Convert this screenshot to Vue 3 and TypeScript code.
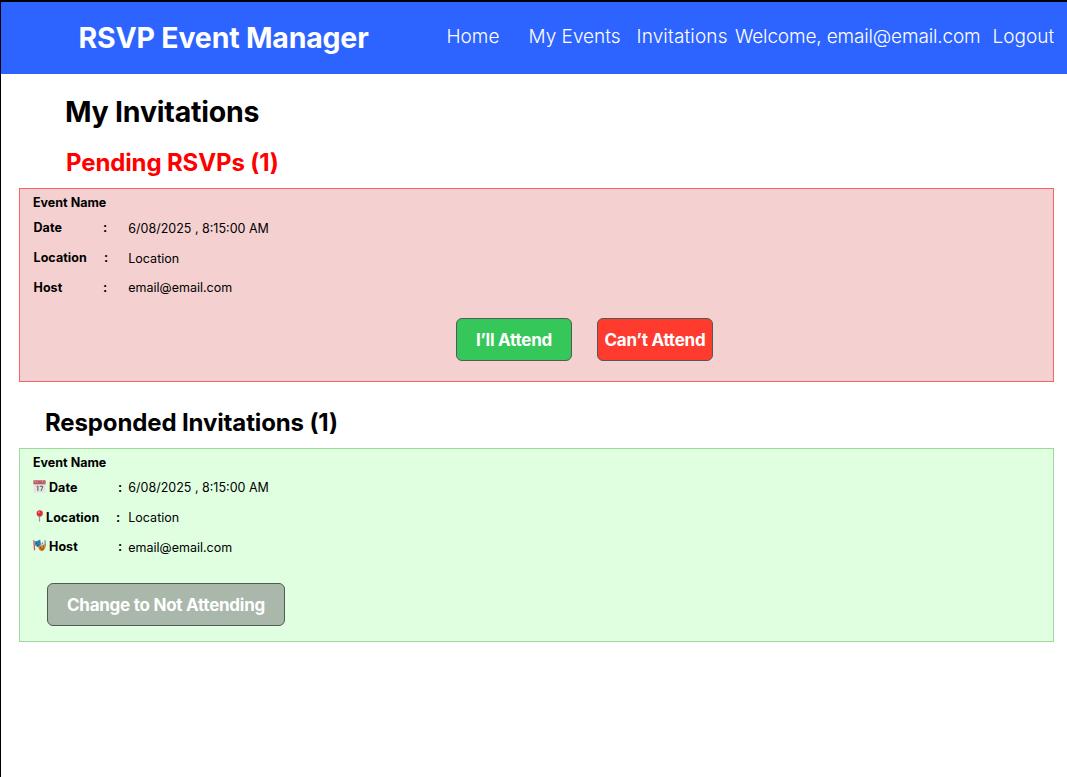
<script setup lang="ts">
interface NavItem {
  label: string
  key: string
}

interface Row {
  key: string
  label: string
  value: string
}

const nav: NavItem[] = [
  { label: 'Home', key: 'home' },
  { label: 'My Events', key: 'events' },
  { label: 'Invitations', key: 'invitations' },
  { label: 'Welcome, email@email.com', key: 'welcome' },
  { label: 'Logout', key: 'logout' },
]

const rows: Row[] = [
  { key: 'date', label: 'Date', value: '6/08/2025 , 8:15:00 AM' },
  { key: 'location', label: 'Location', value: 'Location' },
  { key: 'host', label: 'Host', value: 'email@email.com' },
]
</script>

<template>
  <div class="page">
    <header class="header">
      <div class="brand">RSVP Event Manager</div>
      <nav class="nav">
        <a v-for="item in nav" :key="item.key" :class="['nav-item', item.key]">{{ item.label }}</a>
      </nav>
    </header>
    <main>
      <h1 class="title">My Invitations</h1>
      <h2 class="subtitle pending-title">Pending RSVPs (1)</h2>
      <section class="card pending">
        <h3 class="event">Event Name</h3>
        <dl class="rows">
          <div v-for="row in rows" :key="row.key" :class="['row', row.key]">
            <dt class="label">{{ row.label }}</dt>
            <span class="colon">:</span>
            <dd class="value">{{ row.value }}</dd>
          </div>
        </dl>
        <div class="actions">
          <button class="btn attend">I’ll Attend</button>
          <button class="btn decline">Can’t Attend</button>
        </div>
      </section>
      <h2 class="subtitle responded-title">Responded Invitations (1)</h2>
      <section class="card responded">
        <h3 class="event">Event Name</h3>
        <dl class="rows">
          <div v-for="row in rows" :key="row.key" :class="['row', row.key]">
            <svg v-if="row.key === 'date'" class="icon" viewBox="0 0 13 13">
              <rect x="0.4" y="0.3" width="12.2" height="12.4" rx="0.5" fill="#e4e6e3" />
              <path d="M.4 .3h12.2v4H.4z" fill="#b85c60" />
              <path d="M2.2 1.2v1.5M4.2 2.4h1M9.5 1v1.2M11 2.5v.8" stroke="#e4b6b4" stroke-width=".8" />
              <path d="M3.6 6.6L4.9 6v5M6.7 6.3h3.2L8 11" fill="none" stroke="#555f61" stroke-width="1" />
            </svg>
            <svg v-else-if="row.key === 'location'" class="icon" viewBox="0 0 10 13">
              <path d="M6.5 6v5.6" stroke="#8c9a98" stroke-width="1.2" />
              <circle cx="6.7" cy="3.4" r="3.1" fill="#dc3038" />
              <circle cx="5.8" cy="2.3" r="1" fill="#f38583" />
            </svg>
            <svg v-else class="icon" viewBox="0 0 13 13">
              <path d="M.8 1.2l.8 10" stroke="#d55348" stroke-width="1.3" />
              <path d="M1.8 2.2Q4.3 2.4 7.2 .4L8 5.2Q7.2 8.3 5 8.3 2.6 8 1.8 5.3z" fill="#2d86c4" />
              <path d="M2.9 4.3l1 .1M5.5 3.4l1-.4M4 6.6l2-.8" stroke="#123f6b" stroke-width=".9" />
              <path d="M11.9 1.2l.5 6" stroke="#3684b4" stroke-width="1.1" />
              <path d="M5.2 6.6Q8.3 7.2 12.3 4.8L12.4 8.5Q11.4 12.2 8.5 12.2 5.6 11.4 5.2 8.6z" fill="#d18a36" />
              <path d="M6.7 8.2l1.3.2M9.9 7.6l1-.5M7.4 9.9q2 1 3.5-.9" fill="none" stroke="#5d341d" stroke-width=".9" />
              <path d="M8.7 5.5l1.2-2" stroke="#dd4b43" stroke-width="1.1" />
            </svg>
            <dt class="label">{{ row.label }}</dt>
            <span class="colon">:</span>
            <dd class="value">{{ row.value }}</dd>
          </div>
        </dl>
        <button class="btn change">Change to Not Attending</button>
      </section>
    </main>
  </div>
</template>

<style>
body {
  margin: 0;
  background: #fff;
}
</style>

<style scoped>
.page {
  box-sizing: border-box;
  width: 1067px;
  height: 777px;
  overflow: hidden;
  border-top: 2px solid #000;
  border-left: 1px solid #000;
  background: #fff;
  color: #000;
  font-family: Inter, "Liberation Sans", sans-serif;
  white-space: nowrap;
}
.header {
  display: flex;
  height: 72px;
  background: #2d63ff;
  color: #fff;
}
.brand {
  width: 368px;
  box-sizing: border-box;
  padding-left: 77.5px;
  font-size: 28.5px;
  font-weight: 700;
  letter-spacing: -0.2px;
  line-height: 72px;
}
.nav {
  display: flex;
  padding-left: 77.5px;
  font-size: 19px;
  font-weight: 300;
  line-height: 69px;
}
.nav-item { flex: none; }
.home { width: 82px; }
.events { width: 108px; }
.invitations {
  width: 98.5px;
  letter-spacing: 0.15px;
}
.welcome {
  width: 257.5px;
  letter-spacing: -0.15px;
}
h1, h2, h3, dl, dd { margin: 0; }
.title {
  padding: 20px 0 0 64px;
  font-size: 28.5px;
  font-weight: 700;
  letter-spacing: -0.22px;
  line-height: 36px;
}
.subtitle {
  font-size: 24px;
  font-weight: 700;
  letter-spacing: -0.13px;
  line-height: 30px;
}
.pending-title {
  padding: 18px 0 10px 65px;
  color: #f00;
}
.responded-title { padding: 26px 0 10px 44px; }
.card {
  box-sizing: border-box;
  width: 1035px;
  height: 194px;
  margin-left: 18px;
  border: 1px solid;
}
.pending {
  background: #f4d0d0;
  border-color: #f66364;
}
.responded {
  background: #e0ffe1;
  border-color: #a0d79a;
}
.event {
  padding: 4px 0 0 13px;
  font-size: 12.5px;
  font-weight: 700;
  line-height: 20px;
}
.rows { padding-left: 13.5px; }
.row {
  display: flex;
  align-items: center;
  height: 29.7px;
  font-size: 12.5px;
}
.label {
  flex: none;
  width: 69.5px;
  font-weight: 700;
  letter-spacing: 0.06px;
}
.colon {
  width: 25.3px;
  font-weight: 700;
}
.location .label { width: 70.5px; }
.location .colon { width: 24.3px; }
.value {
  padding-top: 1px;
  font-weight: 400;
}
.icon {
  flex: none;
  width: 13px;
  height: 13px;
  margin: 0 3px 2px 0;
}
.responded .rows {
  padding-left: 13px;
  margin-top: -0.5px;
}
.responded .label { width: 69px; }
.responded .location .label { width: 70px; }
.responded .location .icon { width: 10px; }
.responded .colon { width: 10.3px; }
.responded .location .colon { width: 12.3px; }
.actions {
  display: flex;
  gap: 25px;
  padding: 16px 0 0 436px;
}
.btn {
  display: block;
  box-sizing: border-box;
  width: 116px;
  height: 43px;
  padding: 0;
  border: 1px solid #515b53;
  border-radius: 6px;
  color: #fff;
  font-family: inherit;
  font-size: 17px;
  font-weight: 700;
  letter-spacing: -0.22px;
  text-align: center;
}
.attend { background: #35c759; }
.decline { background: #ff3b30; }
.change {
  width: 238px;
  margin: 21.5px 0 0 27px;
  background: #aab7ab;
  letter-spacing: -0.26px;
}
</style>
